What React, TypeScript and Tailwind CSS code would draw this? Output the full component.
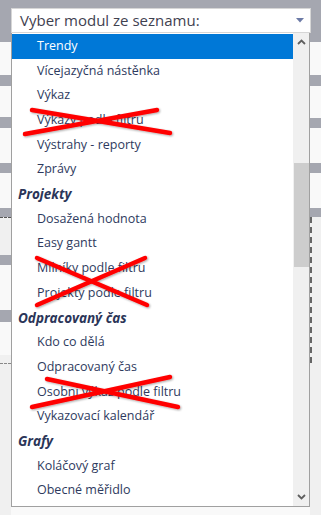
const items: { label: string; group?: boolean; active?: boolean }[] = [
  { label: 'Trendy', active: true },
  { label: 'Vícejazyčná nástěnka' },
  { label: 'Výkaz' },
  { label: 'Výkazy podle filtru' },
  { label: 'Výstrahy - reporty' },
  { label: 'Zprávy' },
  { label: 'Projekty', group: true },
  { label: 'Dosažená hodnota' },
  { label: 'Easy gantt' },
  { label: 'Milníky podle filtru' },
  { label: 'Projekty podle filtru' },
  { label: 'Odpracovaný čas', group: true },
  { label: 'Kdo co dělá' },
  { label: 'Odpracovaný čas' },
  { label: 'Osobní výkaz podle filtru' },
  { label: 'Vykazovací kalendář' },
  { label: 'Grafy', group: true },
  { label: 'Koláčový graf' },
  { label: 'Obecné měřidlo' },
]

// red crosses over the modules that were removed
const crosses = [
  [32, 110, 170, 133, 25, 134, 157, 110],
  [37, 258, 147, 305, 37, 305, 145, 258],
  [47, 379, 178, 407, 32, 407, 170, 377],
]

const LeftEdge = () => (
  <div className="flex flex-col w-[11px] h-full">
    <div className="h-[42px] bg-[#a5a7b0]" />
    <div className="h-[33px] bg-[#f9f9f9]" />
    <div className="h-[11px] bg-[#a5a7b0]" />
    <div className="h-[31px] bg-[#f9f9f9]" />
    <div className="h-[11px] bg-[#a5a7b0]" />
    <div className="h-[35px] bg-[#f9f9f9]" />
    <div className="h-[10px] bg-[#a5a7b0]" />
    <div className="h-[35px] bg-[#f9f9f9]" />
    <div className="h-[9px] bg-[#a5a7b0]" />
    <div className="h-[38px] bg-[#f0f0f0] border-t border-dashed border-[#555]" />
    <div className="h-[10px] bg-[#a5a7b0]" />
    <div className="h-[45px] bg-[#f9f9f9]" />
    <div className="h-[12px] bg-[#a5a7b0]" />
    <div className="h-[33px] bg-[#f9f9f9]" />
    <div className="h-[8px] bg-[#f0f0f0]" />
    <div className="flex-1 bg-[#f0f0f0] border-t border-dashed border-[#888]" />
  </div>
)

const RightEdge = () => (
  <div className="flex flex-col w-[11px] h-full">
    <div className="h-[42px] bg-[#a5a7b0]" />
    <div className="h-[33px] bg-[#f9f9f9]" />
    <div className="h-[11px] bg-[#a5a7b0]" />
    <div className="h-[32px] bg-[#f9f9f9]" />
    <div className="h-[10px] bg-[#a5a7b0]" />
    <div className="h-[35px] bg-[#f9f9f9]" />
    <div className="h-[10px] bg-[#a5a7b0]" />
    <div className="h-[35px] bg-[#f9f9f9]" />
    <div className="h-[9px] bg-[#a5a7b0]" />
    <div className="h-[146px] bg-[#f0f0f0] border-l-2 border-dashed border-[#666]" />
    <div className="flex-1 bg-[#f0f0f0]" />
  </div>
)

const Chevron = ({ up }: { up?: boolean }) => (
  <svg width="9" height="6" viewBox="0 0 9 6" className="block">
    <path
      d={up ? 'M1 5 L4.5 1.5 L8 5' : 'M1 1 L4.5 4.5 L8 1'}
      fill="none"
      stroke="#5f5f5f"
      strokeWidth="1.8"
    />
  </svg>
)

const App = () => {
  return (
    <div
      className="relative w-[321px] h-[515px] overflow-hidden bg-[#f0f0f0]"
      style={{ fontFamily: '"Open Sans", "Noto Sans", sans-serif' }}
    >
      <div className="flex flex-row h-full">
        <LeftEdge />
        <div className="flex-1 flex flex-col">
          <div className="h-[42px] bg-[#a5a7b0]" />
          <div className="flex-1 bg-[#f9f9f9]" />
        </div>
        <RightEdge />
      </div>

      <div className="absolute left-[11px] top-[8px] flex flex-col">
        <div className="w-[300px] h-[25px] bg-white border border-[#d6d6d6] flex items-center justify-between pl-[8px] pr-[6px]">
          <span className="text-[15px] text-[#3f4150] leading-none">Vyber modul ze seznamu:</span>
          <svg width="8" height="5" viewBox="0 0 8 5">
            <path d="M0 0 L8 0 L4 4.5 Z" fill="#6c7aa6" />
          </svg>
        </div>

        <div className="w-[299px] h-[474px] bg-white border border-[#a0a0a0] border-t-0 flex flex-row">
          <div className="w-[281px] flex flex-col pt-[1px]">
            {items.map((it) => (
              <div
                key={it.label + (it.group ? 'g' : '')}
                className={
                  'h-[24.7px] flex items-center whitespace-nowrap ' +
                  (it.active
                    ? 'bg-[#0078d7] text-white text-[12.5px] pl-[25px]'
                    : it.group
                    ? 'text-[#2b3558] text-[13.5px] font-bold italic pl-[6px]'
                    : 'text-[#2e3a5e] text-[12.5px] pl-[25px]')
                }
              >
                {it.label}
              </div>
            ))}
          </div>
          <div className="w-[16px] bg-[#f0f0f0] flex flex-col items-center">
            <div className="h-[18px] flex items-center justify-center">
              <Chevron up />
            </div>
            <div className="mt-[112px] w-[15px] h-[104px] bg-[#cdcdcd]" />
            <div className="flex-1" />
            <div className="h-[18px] flex items-center justify-center">
              <Chevron />
            </div>
          </div>
        </div>
      </div>

      <svg className="absolute inset-0 pointer-events-none" width="321" height="515">
        <defs>
          <filter id="soft" x="-10%" y="-50%" width="120%" height="200%">
            <feGaussianBlur in="SourceAlpha" stdDeviation="1.2" />
            <feOffset dx="1" dy="1" result="b" />
            <feComponentTransfer>
              <feFuncA type="linear" slope="0.35" />
            </feComponentTransfer>
            <feMerge>
              <feMergeNode />
              <feMergeNode in="SourceGraphic" />
            </feMerge>
          </filter>
        </defs>
        {crosses.map((c, i) => (
          <g key={i} filter="url(#soft)" stroke="#ff0000" strokeWidth="4.5" strokeLinecap="round">
            <line x1={c[0]} y1={c[1]} x2={c[2]} y2={c[3]} />
            <line x1={c[4]} y1={c[5]} x2={c[6]} y2={c[7]} />
          </g>
        ))}
      </svg>
    </div>
  )
}

export default App
